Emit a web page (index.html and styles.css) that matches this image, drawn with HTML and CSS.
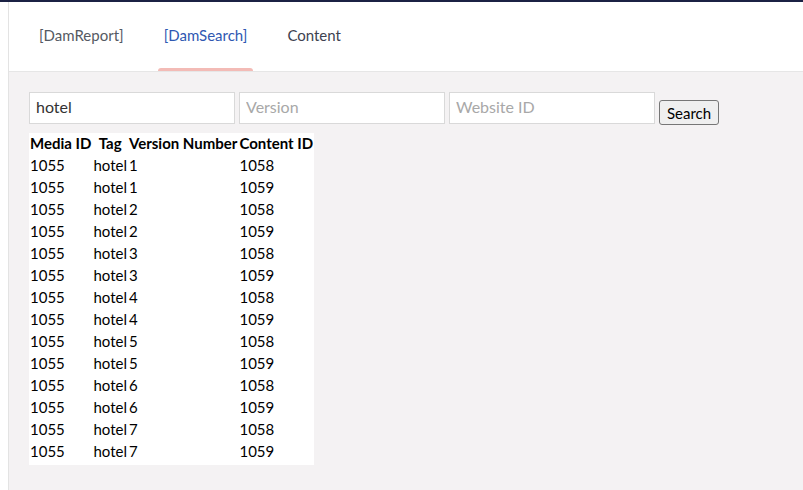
FILE: index.html
```html
<!DOCTYPE html>
<html>
<head>
<meta charset="utf-8">
<link rel="stylesheet" href="styles.css">
</head>
<body>
<div class="topbar"></div>
<div class="layout">
  <div class="sidebar"></div>
  <div class="main">
    <header class="header">
      <nav class="tabs">
        <a class="tab">[DamReport]</a>
        <a class="tab active">[DamSearch]</a>
        <a class="tab plain">Content</a>
      </nav>
    </header>
    <section class="content">
      <form class="search">
        <input class="field" type="text" value="hotel">
        <input class="field" type="text" placeholder="Version">
        <input class="field" type="text" placeholder="Website ID">
        <button class="btn" type="button">Search</button>
      </form>
      <table class="results">
        <thead>
          <tr><th>Media ID</th><th>Tag</th><th>Version Number</th><th>Content ID</th></tr>
        </thead>
        <tbody>
          <tr><td>1055</td><td>hotel</td><td>1</td><td>1058</td></tr>
          <tr><td>1055</td><td>hotel</td><td>1</td><td>1059</td></tr>
          <tr><td>1055</td><td>hotel</td><td>2</td><td>1058</td></tr>
          <tr><td>1055</td><td>hotel</td><td>2</td><td>1059</td></tr>
          <tr><td>1055</td><td>hotel</td><td>3</td><td>1058</td></tr>
          <tr><td>1055</td><td>hotel</td><td>3</td><td>1059</td></tr>
          <tr><td>1055</td><td>hotel</td><td>4</td><td>1058</td></tr>
          <tr><td>1055</td><td>hotel</td><td>4</td><td>1059</td></tr>
          <tr><td>1055</td><td>hotel</td><td>5</td><td>1058</td></tr>
          <tr><td>1055</td><td>hotel</td><td>5</td><td>1059</td></tr>
          <tr><td>1055</td><td>hotel</td><td>6</td><td>1058</td></tr>
          <tr><td>1055</td><td>hotel</td><td>6</td><td>1059</td></tr>
          <tr><td>1055</td><td>hotel</td><td>7</td><td>1058</td></tr>
          <tr class="last"><td>1055</td><td>hotel</td><td>7</td><td>1059</td></tr>
        </tbody>
      </table>
    </section>
  </div>
</div>
</body>
</html>
```
FILE: styles.css
```css
html, body {
  margin: 0;
  padding: 0;
  height: 100%;
}
body {
  background: #f4f2f3;
  font-family: Lato, "Liberation Sans", sans-serif;
  color: #000;
  display: flex;
  flex-direction: column;
}
.topbar {
  height: 2px;
  background: #1b2144;
  flex: none;
}
.layout {
  flex: 1;
  display: flex;
}
.sidebar {
  width: 8px;
  background: #fff;
  border-right: 1px solid #e3e3e3;
  flex: none;
}
.main {
  flex: 1;
  display: flex;
  flex-direction: column;
}
.header {
  background: #fff;
  height: 69px;
  border-bottom: 1px solid #e6e6e6;
  padding-left: 24px;
}
.tabs {
  display: flex;
  gap: 28px;
  height: 100%;
}
.tab {
  position: relative;
  padding: 0 6px 3px 6px;
  display: flex;
  align-items: center;
  font-size: 15px;
  color: #555a63;
  cursor: pointer;
}
.tab.plain {
  color: #3d4250;
}
.tab.active {
  color: #2f58b2;
}
.tab.active::after {
  content: "";
  position: absolute;
  left: 0;
  right: 0;
  bottom: 0;
  height: 3px;
  background: #f3bbb6;
  border-radius: 3px 3px 0 0;
}
.content {
  padding: 20px 20px;
}
.search {
  display: flex;
  align-items: flex-start;
  gap: 4px;
  margin: 0 0 8px 0;
}
.field {
  box-sizing: border-box;
  width: 206px;
  height: 32px;
  border: 1px solid #d9d9d9;
  background: #fff;
  padding: 0 6px 4px 6px;
  font-family: Lato, "Liberation Sans", sans-serif;
  font-size: 16px;
  color: #333;
  outline: none;
  margin: 0;
}
.field::placeholder {
  color: #a8a8a8;
}
.btn {
  box-sizing: border-box;
  height: 25px;
  padding: 0 7px;
  margin-top: 8px;
  border: 1px solid #767676;
  border-radius: 3px;
  background: #efefef;
  font-family: Lato, "Liberation Sans", sans-serif;
  font-size: 15px;
  color: #000;
}
.results {
  background: #fff;
  border-collapse: separate;
  border-spacing: 0;
  font-size: 15px;
  line-height: 20px;
}
.results th {
  font-weight: bold;
  padding: 0 1px 2px 1px;
  text-align: center;
}
.results td {
  padding: 0 1px 2px 1px;
  text-align: left;
}
.results tr.last td {
  padding-bottom: 4px;
}
```
